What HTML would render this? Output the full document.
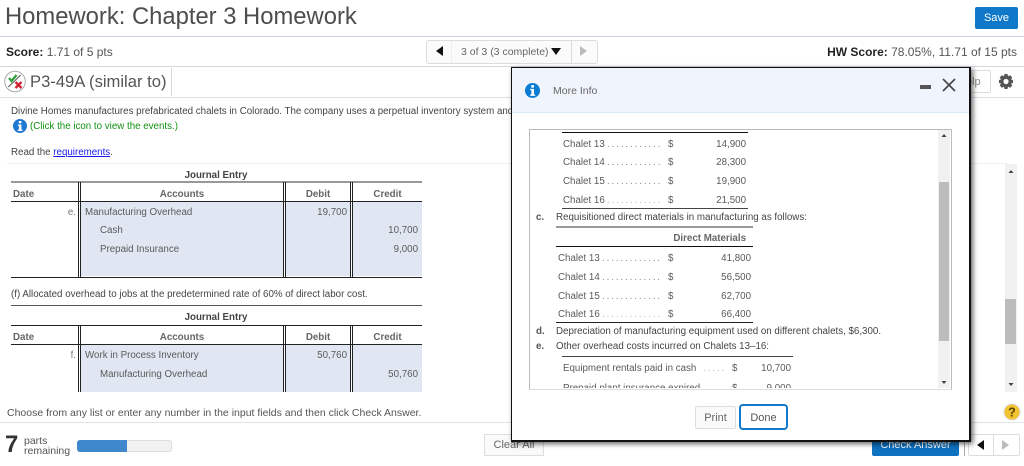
<!DOCTYPE html>
<html><head><meta charset="utf-8">
<style>
html,body{margin:0;padding:0;background:#fff}
#p{position:relative;width:1024px;height:466px;overflow:hidden;background:#fff;font-family:"Liberation Sans",Arial,sans-serif;color:#555}
#p div,#p span.a,#p svg{position:absolute}
.t{white-space:nowrap;font-size:9.75px;line-height:14px;height:14px;color:#5a5a5a;filter:blur(.3px)}
.r{text-align:right}
.c{text-align:center}
.b{font-weight:bold}
.l{height:1px;background:#222}
.v{width:1px;background:#222}
.f{background:#e1e7f2}
</style></head><body><div id="p">

<div class="t" style="left:5px;top:2px;font-size:23.8px;line-height:30px;height:30px;color:#4d4d4d">Homework: Chapter 3 Homework</div>
<div class="t c" style="left:975px;top:7px;width:43px;height:22px;line-height:22px;background:#0f78c9;border-radius:2px;color:#fff;font-size:11px">Save</div>
<div style="left:0;top:36px;width:1024px;height:1px;background:#c9d1de"></div>

<div class="t" style="left:6px;top:45px;font-size:12px;color:#555;line-height:15px;height:15px"><b style="color:#222">Score:</b> 1.71 of 5 pts</div>
<div style="left:426px;top:40px;width:170px;height:22px;border:1px solid #ddd;border-radius:3px;background:#fbfbfb"></div>
<div style="left:451px;top:41px;width:1px;height:22px;background:#eee"></div>
<div style="left:571px;top:41px;width:1px;height:22px;background:#ddd"></div>
<svg style="left:436px;top:46px" width="8" height="11"><path d="M7 0V10L0 5Z" fill="#111"/></svg>
<div class="t" style="left:461px;top:45px;font-size:10.5px;line-height:15px;height:15px;color:#666">3 of 3 (3 complete)</div>
<svg style="left:551px;top:48px" width="10" height="7"><path d="M0 0H10L5 7Z" fill="#111"/></svg>
<svg style="left:580px;top:46px" width="8" height="11"><path d="M0 0V10L7 5Z" fill="#bbb"/></svg>
<div class="t" style="right:7px;top:45px;font-size:12px;color:#555;line-height:15px;height:15px"><b style="color:#222">HW Score:</b> 78.05%, 11.71 of 15 pts</div>
<div style="left:0;top:66px;width:1024px;height:1px;background:#d3d8e0"></div>

<svg style="left:4px;top:70px" width="23" height="23" viewBox="0 0 23 23"><circle cx="11" cy="11.500" r="10.300" fill="#fff" stroke="#aaa" stroke-width="1"/><path d="M5 8L7.500 11L12.500 5" fill="none" stroke="#2e9e3a" stroke-width="2.200"/><path d="M4.300 17L16.700 5" stroke="#555" stroke-width="1"/><path d="M11.500 12L17.500 18M17.500 12L11.500 18" stroke="#d3222f" stroke-width="2.300"/></svg>
<div class="t" style="left:30px;top:72px;font-size:16.6px;line-height:20px;height:20px;color:#555">P3-49A (similar to)</div>
<div style="left:171px;top:68px;width:1px;height:28px;background:#d8d8d8"></div>
<div style="left:958px;top:70px;width:31px;height:21px;border:1px solid #ddd;border-radius:2px"></div>
<div class="t" style="left:966px;top:75px;font-size:11px;color:#888">elp</div>
<svg style="left:998px;top:73px" width="16" height="17" viewBox="0 0 16 17"><path d="M6.500 1H9.500L10 3.300L12.200 2.300L14.200 4.500L13 6.500L15 7V10L13 10.500L14.200 12.500L12.200 14.700L10 13.700L9.500 16H6.500L6 13.700L3.800 14.700L1.800 12.500L3 10.500L1 10V7L3 6.500L1.800 4.500L3.800 2.300L6 3.300Z" fill="#555"/><circle cx="8" cy="8.500" r="2.600" fill="#fff"/></svg>
<div style="left:0;top:97px;width:1024px;height:1px;background:#dcdfe5"></div>

<div class="t" style="left:11px;top:105px;color:#444">Divine Homes manufactures prefabricated chalets in Colorado. The company uses a perpetual inventory system and a job order costing system.</div>
<svg style="left:13px;top:119px" width="14" height="14" viewBox="0 0 14 14"><circle cx="7" cy="7" r="7" fill="#1f78d1"/><rect x="5.800" y="2" width="2.600" height="2.300" fill="#fff"/><path d="M4.800 5.500H8.400V10.800H9.500V12H4.800V10.800H5.900V6.700H4.800Z" fill="#fff"/></svg>
<div class="t" style="left:30px;top:120px;color:#129012">(Click the icon to view the events.)</div>
<div class="t" style="left:11px;top:146px;color:#444">Read the <span style="color:#1a1aee;text-decoration:underline">requirements</span>.</div>

<div style="left:7px;top:163px;width:1000px;height:1px;background:#eef0f4"></div>
<div style="left:1005px;top:164px;width:12px;height:228px;background:#f1f1f1"></div>
<svg style="left:1005px;top:169px" width="12" height="6"><path d="M3.500 4H8.500L6 1Z" fill="#444"/></svg>
<svg style="left:1005px;top:382px" width="12" height="6"><path d="M3.500 1H8.500L6 4Z" fill="#444"/></svg>
<div style="left:1005px;top:299px;width:11px;height:45px;background:#bcbcbc"></div>

<!-- table 1 -->
<div class="t b c" style="left:81px;top:169px;width:270px;color:#444">Journal Entry</div>
<div style="left:11px;top:181px;width:411px;height:2px;background:#999"></div>
<div class="t b" style="left:13px;top:188px;color:#666">Date</div>
<div class="t b c" style="left:81px;top:188px;width:202px;color:#666">Accounts</div>
<div class="t b c" style="left:286px;top:188px;width:64px;color:#666">Debit</div>
<div class="t b c" style="left:353px;top:188px;width:69px;color:#666">Credit</div>
<div class="l" style="left:11px;top:201px;width:411px"></div>
<div class="f" style="left:81px;top:202px;width:202px;height:74px"></div>
<div class="f" style="left:286px;top:202px;width:64px;height:74px"></div>
<div class="f" style="left:353px;top:202px;width:69px;height:74px"></div>
<div class="l" style="left:11px;top:277px;width:411px"></div>
<div class="v" style="left:78px;top:182px;height:96px"></div><div class="v" style="left:80px;top:182px;height:96px"></div>
<div class="v" style="left:283px;top:182px;height:96px"></div><div class="v" style="left:285px;top:182px;height:96px"></div>
<div class="v" style="left:350px;top:182px;height:96px"></div><div class="v" style="left:352px;top:182px;height:96px"></div>
<div class="t r" style="left:50px;top:206px;width:26px;color:#777">e.</div>
<div class="t" style="left:85px;top:206px">Manufacturing Overhead</div>
<div class="t r" style="left:290px;top:206px;width:57px">19,700</div>
<div class="t" style="left:100px;top:224px">Cash</div>
<div class="t r" style="left:360px;top:224px;width:58px">10,700</div>
<div class="t" style="left:100px;top:243px">Prepaid Insurance</div>
<div class="t r" style="left:360px;top:243px;width:58px">9,000</div>

<div class="t" style="left:11px;top:288px;color:#444">(f) Allocated overhead to jobs at the predetermined rate of 60% of direct labor cost.</div>
<div class="l" style="left:11px;top:305px;width:411px;background:#555"></div>

<!-- table 2 -->
<div class="t b c" style="left:81px;top:311px;width:270px;color:#444">Journal Entry</div>
<div class="l" style="left:11px;top:325px;width:411px"></div>
<div class="t b" style="left:13px;top:331px;color:#666">Date</div>
<div class="t b c" style="left:81px;top:331px;width:202px;color:#666">Accounts</div>
<div class="t b c" style="left:286px;top:331px;width:64px;color:#666">Debit</div>
<div class="t b c" style="left:353px;top:331px;width:69px;color:#666">Credit</div>
<div class="l" style="left:11px;top:344px;width:411px"></div>
<div class="f" style="left:81px;top:345px;width:202px;height:47px"></div>
<div class="f" style="left:286px;top:345px;width:64px;height:47px"></div>
<div class="f" style="left:353px;top:345px;width:69px;height:47px"></div>
<div class="v" style="left:78px;top:325px;height:67px"></div><div class="v" style="left:80px;top:325px;height:67px"></div>
<div class="v" style="left:283px;top:325px;height:67px"></div><div class="v" style="left:285px;top:325px;height:67px"></div>
<div class="v" style="left:350px;top:325px;height:67px"></div><div class="v" style="left:352px;top:325px;height:67px"></div>
<div class="t r" style="left:50px;top:349px;width:26px;color:#777">f.</div>
<div class="t" style="left:85px;top:349px">Work in Process Inventory</div>
<div class="t r" style="left:290px;top:349px;width:57px">50,760</div>
<div class="t" style="left:100px;top:368px">Manufacturing Overhead</div>
<div class="t r" style="left:360px;top:368px;width:58px">50,760</div>

<div class="t" style="left:7px;top:406px;font-size:10.500px;color:#555">Choose from any list or enter any number in the input fields and then click Check Answer.</div>
<svg style="left:1003px;top:403px" width="18" height="18" viewBox="0 0 18 18"><circle cx="9" cy="9" r="8" fill="#f2c230" stroke="#ddd" stroke-width="1"/><text x="9" y="13.500" font-family="Liberation Sans" font-size="12.500" font-weight="bold" text-anchor="middle" fill="#5a4300">?</text></svg>
<div style="left:0;top:422px;width:1024px;height:1px;background:#e0e3ec"></div>

<div class="t b" style="left:5px;top:431px;font-size:24px;line-height:28px;height:28px;color:#333">7</div>
<div class="t" style="left:24px;top:436px;font-size:10.500px;line-height:10px;height:22px;color:#555">parts<br>remaining</div>
<div style="left:77px;top:440px;width:93px;height:10px;background:#f1f1f1;border:1px solid #ddd;border-radius:3px"></div>
<div style="left:77px;top:440px;width:50px;height:12px;background:#3f88cc;border-radius:3px 0 0 3px"></div>

<div class="t c" style="left:484px;top:434px;width:58px;height:20px;line-height:21px;border:1px solid #ddd;background:#fafafa;font-size:11px;color:#666">Clear All</div>
<div class="t c" style="left:872px;top:434px;width:87px;height:22px;line-height:23px;background:#0f72c0;border-radius:2px;color:#fff;font-size:11px">Check Answer</div>
<div style="left:964px;top:434px;width:1px;height:22px;background:#aaa"></div>
<div style="left:968px;top:434px;width:50px;height:20px;border:1px solid #ddd;border-radius:2px"></div>
<div style="left:993px;top:435px;width:1px;height:20px;background:#ddd"></div>
<svg style="left:977px;top:440px" width="8" height="11"><path d="M7 0V10L0 5Z" fill="#111"/></svg>
<svg style="left:1002px;top:440px" width="8" height="11"><path d="M0 0V10L7 5Z" fill="#bbb"/></svg>

<!-- modal -->
<div style="left:511px;top:67px;width:457px;height:372px;background:#fff;border:1px solid #111;border-right:2px solid #111;border-bottom:2px solid #111;box-sizing:content-box;box-shadow:2px 2px 5px rgba(0,0,0,.6);overflow:hidden">
  <div style="left:0;top:0;width:457px;height:44px;background:#f0f5fd;border-bottom:1px solid #d9e8f6"></div>
</div>
<svg style="left:525px;top:82.500px" width="15" height="15" viewBox="0 0 14 14"><circle cx="7" cy="7" r="7" fill="#0b7cd3"/><rect x="5.800" y="2" width="2.600" height="2.300" fill="#fff"/><path d="M4.800 5.500H8.400V10.800H9.500V12H4.800V10.800H5.900V6.700H4.800Z" fill="#fff"/></svg>
<div class="t" style="left:553px;top:84px;font-size:10.500px;color:#666">More Info</div>
<div style="left:920px;top:85px;width:11px;height:4px;background:#555"></div>
<svg style="left:942px;top:78px" width="14" height="14"><path d="M1 1L13 13M13 1L1 13" stroke="#444" stroke-width="1.600"/></svg>

<div style="left:529px;top:129px;width:421px;height:259px;border:1px solid #bbb;border-bottom-color:#ddd;background:#fff;overflow:hidden"></div>
<div style="left:938px;top:130px;width:12px;height:258px;background:#f1f1f1"></div>
<div style="left:939px;top:182px;width:10px;height:159px;background:#bcbcbc"></div>
<svg style="left:938px;top:133px" width="12" height="6"><path d="M3.500 4H8.500L6 1Z" fill="#444"/></svg>
<svg style="left:938px;top:380px" width="12" height="6"><path d="M3.500 1H8.500L6 4Z" fill="#444"/></svg>

<div class="l" style="left:562px;top:132px;width:186px;height:1px;background:#111"></div>
<div class="t" style="left:563px;top:138px">Chalet 13</div><div class="t" style="left:607px;top:138px;letter-spacing:1.900px;color:#888">............</div><div class="t" style="left:668px;top:138px">$</div><div class="t r" style="left:690px;top:138px;width:56px">14,900</div>
<div class="t" style="left:563px;top:156px">Chalet 14</div><div class="t" style="left:607px;top:156px;letter-spacing:1.900px;color:#888">............</div><div class="t" style="left:668px;top:156px">$</div><div class="t r" style="left:690px;top:156px;width:56px">28,300</div>
<div class="t" style="left:563px;top:175px">Chalet 15</div><div class="t" style="left:607px;top:175px;letter-spacing:1.900px;color:#888">............</div><div class="t" style="left:668px;top:175px">$</div><div class="t r" style="left:690px;top:175px;width:56px">19,900</div>
<div class="t" style="left:563px;top:194px">Chalet 16</div><div class="t" style="left:607px;top:194px;letter-spacing:1.900px;color:#bbb">............</div><div class="t" style="left:668px;top:194px">$</div><div class="t r" style="left:690px;top:194px;width:56px">21,500</div>
<div class="l" style="left:562px;top:208px;width:186px;background:#444"></div>
<div class="t b" style="left:536px;top:211px;color:#555">c.</div>
<div class="t" style="left:556px;top:211px;color:#444">Requisitioned direct materials in manufacturing as follows:</div>
<div style="left:556px;top:226px;width:197px;height:2px;background:#999"></div>
<div class="t b r" style="left:620px;top:232px;width:126px;color:#666">Direct Materials</div>
<div class="l" style="left:556px;top:246px;width:197px;background:#111"></div>
<div class="t" style="left:558px;top:252px">Chalet 13</div><div class="t" style="left:602px;top:252px;letter-spacing:1.900px;color:#888">.............</div><div class="t" style="left:668px;top:252px">$</div><div class="t r" style="left:695px;top:252px;width:56px">41,800</div>
<div class="t" style="left:558px;top:271px">Chalet 14</div><div class="t" style="left:602px;top:271px;letter-spacing:1.900px;color:#888">.............</div><div class="t" style="left:668px;top:271px">$</div><div class="t r" style="left:695px;top:271px;width:56px">56,500</div>
<div class="t" style="left:558px;top:290px">Chalet 15</div><div class="t" style="left:602px;top:290px;letter-spacing:1.900px;color:#888">.............</div><div class="t" style="left:668px;top:290px">$</div><div class="t r" style="left:695px;top:290px;width:56px">62,700</div>
<div class="t" style="left:558px;top:308px">Chalet 16</div><div class="t" style="left:602px;top:308px;letter-spacing:1.900px;color:#bbb">.............</div><div class="t" style="left:668px;top:308px">$</div><div class="t r" style="left:695px;top:308px;width:56px">66,400</div>
<div class="l" style="left:556px;top:322px;width:197px;background:#222"></div>
<div class="t b" style="left:536px;top:325px;color:#555">d.</div>
<div class="t" style="left:556px;top:325px;color:#444">Depreciation of manufacturing equipment used on different chalets, $6,300.</div>
<div class="t b" style="left:536px;top:340px;color:#555">e.</div>
<div class="t" style="left:556px;top:340px;color:#444">Other overhead costs incurred on Chalets 13–16:</div>
<div class="l" style="left:562px;top:356px;width:231px;background:#444"></div>
<div class="t" style="left:563px;top:362px">Equipment rentals paid in cash</div><div class="t" style="left:703px;top:362px;letter-spacing:1.900px;color:#bbb">.....</div><div class="t" style="left:732px;top:362px">$</div><div class="t r" style="left:735px;top:362px;width:56px">10,700</div>
<div style="left:530px;top:378px;width:408px;height:10px;overflow:hidden;background:transparent">
  <div class="t" style="left:33px;top:4px">Prepaid plant insurance expired</div><div class="t" style="left:202px;top:4px">$</div><div class="t r" style="left:205px;top:4px;width:56px">9,000</div>
</div>

<div class="t c" style="left:695px;top:406px;width:39px;height:21px;line-height:22px;border:1px solid #ddd;border-radius:2px;background:#fafafa;font-size:11px;color:#666">Print</div>
<div class="t c" style="left:739px;top:404px;width:45px;height:22px;line-height:24px;border:2px solid #1479c9;border-radius:4px;background:#fff;font-size:11px;color:#555">Done</div>

</div></body></html>
